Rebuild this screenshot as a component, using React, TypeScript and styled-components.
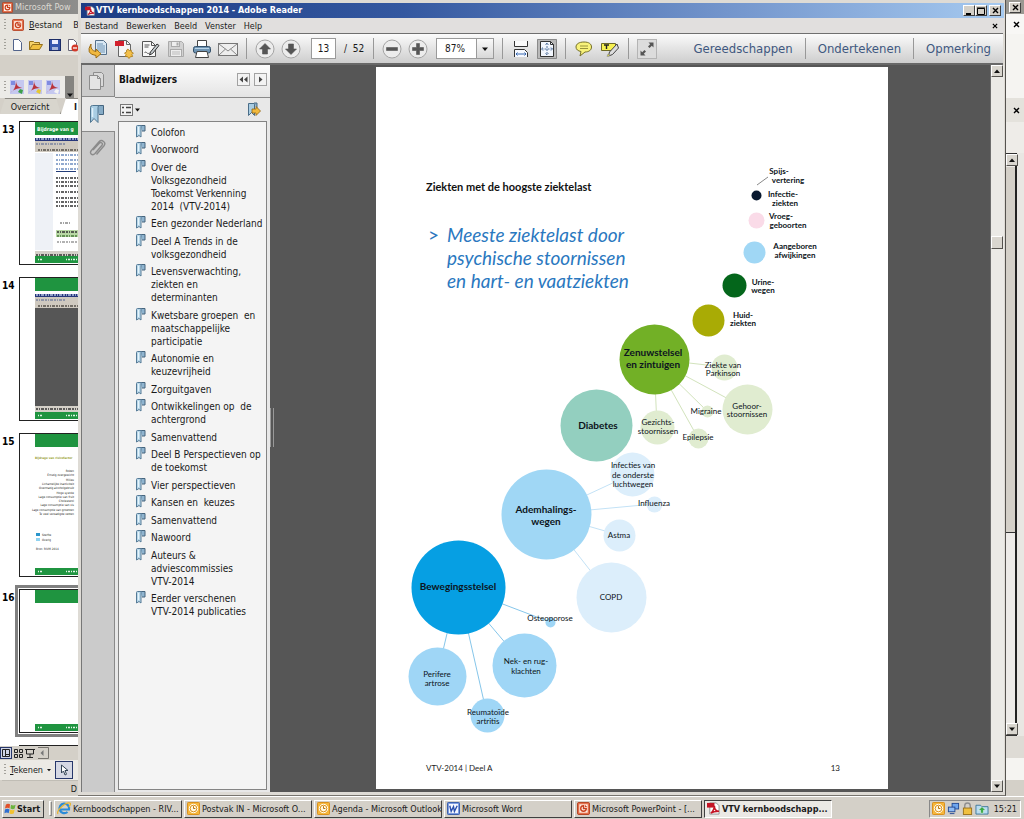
import React from "react";
import styled, { createGlobalStyle } from "styled-components";

const ui = `"DejaVu Sans Condensed", "DejaVu Sans", sans-serif`;
const doc = `Lato, "Noto Sans", sans-serif`;

const GlobalStyle = createGlobalStyle`
  * { box-sizing: border-box; }
  body { margin: 0; background: #d4d0c8; font: 9px/12px ${ui}; color: #1a1a1a; overflow: hidden; }
  button, input, select { font: inherit; color: inherit; margin: 0; padding: 0; border: 0; background: none; }
  button { flex: none; display: flex; align-items: center; justify-content: center; }
  svg { display: block; flex: none; }
  a { color: inherit; text-decoration: none; }
`;

/* ---------- Desktop ---------- */
const Desktop = styled.div`
  display: flex;
  flex-direction: column;
  height: 100vh;
  min-height: 600px;
`;
const Windows = styled.main`
  flex: 1;
  min-height: 0;
  display: grid;
  grid-template-columns: 78px minmax(0, 1fr) 18px;
  grid-template-rows: minmax(0, 1fr);
`;

/* ---------- PowerPoint, visible left edge ---------- */
const PowerPoint = styled.section`
  display: flex;
  flex-direction: column;
  overflow: hidden;
  background: #d4d0c8;
  white-space: nowrap;
`;
const PptTitle = styled.div`
  display: flex;
  align-items: center;
  gap: 2px;
  height: 14px;
  padding-left: 2px;
  background: linear-gradient(90deg, #7c7c7c, #8e8e8c);
  color: #dcd9d2;
  font-size: 9px;
`;
const PptRow = styled.div<{ $h: number }>`
  display: flex;
  align-items: center;
  gap: 6px;
  height: ${(p) => p.$h}px;
  padding-left: 4px;
  background: #e6e4de;
`;
const PptMenu = styled.button`
  margin: 0 5px 0 -1px;
`;
const PptFill = styled.div`
  height: 21px;
`;
const PptTools = styled.div`
  display: flex;
  align-items: center;
  gap: 4px;
  height: 22px;
  width: 74px;
  padding-left: 4px;
  background: #ecebe7;
`;
const Overflow = styled.button`
  align-self: stretch;
  width: 9px;
  margin-left: auto;
  background: #858480;
  && { align-items: flex-end; }
`;
const Tabs = styled.div`
  display: flex;
  height: 16px;
  background: #d4d0c8;
`;
const Tab = styled.button<{ $active?: boolean }>`
  flex: none;
  height: 16px;
  width: 61px;
  background: ${(p) => (p.$active ? "#fff" : "#d8d5cd")};
  border-top: 1px solid #8b8982;
  border-right: 1px solid #8b8982;
  clip-path: polygon(5px 0, 92% 0, 100% 100%, 0 100%);
  ${(p) => p.$active && "font-weight: bold; && { justify-content: flex-start; padding-left: 13px; }"}
`;
const Slides = styled.ol`
  flex: 1;
  min-height: 0;
  overflow: hidden;
  margin: 0;
  padding: 7px 0 0;
  list-style: none;
  background: #fff;
  display: flex;
  flex-direction: column;
  gap: 12px;
`;
const Slide = styled.li`
  display: grid;
  grid-template-columns: 19px 1fr;
  flex: none;
  height: 144px;
  color: #000;
`;
const SlideNo = styled.span`
  padding-left: 2px;
  font: bold 10px/18px ${ui};
`;
const Thumb = styled.div<{ $selected?: boolean }>`
  width: 100px;
  border: 1px solid #222;
  background: #fff;
  outline: ${(p) => (p.$selected ? "3px solid #808080" : "none")};
  outline-offset: 1px;
`;
const PptFooter = styled.div`
  display: flex;
  align-items: center;
  height: 14px;
  background: #d4d0c8;
`;
const Draw = styled.div`
  display: flex;
  align-items: center;
  gap: 4px;
  height: 20px;
  padding-left: 4px;
  background: #eceae5;
`;
const DrawCursor = styled.button`
  width: 18px;
  height: 18px;
  border: 1px solid #27376b;
  background: #d5d8e4;
`;
const PptStatus = styled.div`
  height: 15px;
  margin: 0 0 1px 2px;
  text-align: right;
  padding-right: 1px;
  line-height: 16px;
  border-top: 1px solid #c0bdb5;
`;

/* ---------- Reader window ---------- */
const Reader = styled.section`
  display: flex;
  flex-direction: column;
  min-width: 0;
  padding: 3px 1px 3px 3px;
  background: #dedbd5;
  border-right: 1px solid #55534f;
  border-bottom: 1px solid #77746e;
`;
const TitleBar = styled.header`
  display: flex;
  align-items: center;
  gap: 1px;
  height: 15px;
  padding: 0 3px 0 4px;
  background: linear-gradient(90deg, #1c3c84, #3458a0 35%, #7395cc 70%, #a6caf0);
  color: #fff;
`;
const Title = styled.h1`
  flex: 1;
  margin: 0;
  font: bold 9px/15px ${ui};
  white-space: nowrap;
`;
const WinButton = styled.button`
  width: 12px;
  height: 11px;
  background: #d4d0c8;
  border: 1px solid;
  border-color: #fff #404040 #404040 #fff;
  color: #000;
`;
const WinButtons = styled.div`
  display: flex;
  & > :last-child { margin-left: 2px; }
`;
const MenuBar = styled.nav`
  display: flex;
  align-items: center;
  gap: 8px;
  height: 15px;
  padding: 0 6px 0 4px;
  background: #e1dfde;
  & > :last-child { margin-left: auto; }
`;
const Toolbar = styled.div`
  display: flex;
  align-items: center;
  gap: 8px;
  height: 32px;
  margin-right: 1px;
  padding: 0 12px 0 7px;
  border-top: 1px solid #6f6f6f;
  border-bottom: 2px solid #686868;
  background: linear-gradient(#fbfbfb, #e6e6e6 45%, #cecece);
`;
const Group = styled.div`
  display: flex;
  gap: 6px;
`;
const Tool = styled.button<{ $pressed?: boolean }>`
  width: 20px;
  height: 20px;
  border-radius: 1px;
  ${(p) => p.$pressed && "background: #b9b9b9; box-shadow: inset 0 0 0 1px #8a8a8a;"}
`;
const Divider = styled.span`
  width: 1px;
  height: 21px;
  background: #989898;
`;
const PageBox = styled.input`
  width: 25px;
  height: 21px;
  margin-left: 2px;
  border: 1px solid #9a9a9a;
  background: #fff;
  text-align: center;
  font-size: 10px;
`;
const PageTotal = styled.span`
  width: 21px;
  font-size: 10px;
  white-space: nowrap;
`;
const ZoomBox = styled.div`
  display: flex;
  width: 58px;
  height: 21px;
  border: 1px solid #9a9a9a;
  background: linear-gradient(#fafafa, #d8d8d8);
  align-items: center;
  select {
    appearance: none;
    width: 40px;
    height: 19px;
    padding-left: 8px;
    background: #fff;
    border-right: 1px solid #9a9a9a;
    font-size: 10px;
  }
  svg { margin-left: 5px; }
`;
const Tasks = styled.div`
  display: flex;
  align-items: center;
  gap: 12px;
  margin-left: auto;
  color: #3f5880;
  font-size: 13px;
  line-height: 20px;
`;
const ReaderBody = styled.div`
  flex: 1;
  min-height: 0;
  display: grid;
  grid-template-columns: 34px 155px minmax(0, 1fr) 14px;
`;
const Rail = styled.nav`
  background: #cbcbcb;
  border-right: 1px solid #8a8a8a;
  border-left: 1px solid #777;
`;
const RailButton = styled.button<{ $active?: boolean }>`
  width: ${(p) => (p.$active ? 33 : 32)}px;
  height: ${(p) => (p.$active ? 35 : 32)}px;
  background: ${(p) => (p.$active ? "#e8e8e8" : "#cbcbcb")};
  border-bottom: 1px solid #8a8a8a;
  padding-right: 3px;
  &:last-child { border-bottom: 0; }
`;
const Panel = styled.aside`
  display: flex;
  flex-direction: column;
  min-height: 0;
  background: #e8e8e8;
`;
const PanelHead = styled.div`
  display: flex;
  align-items: center;
  gap: 4px;
  height: 33px;
  padding: 0 3px 3px 4px;
  background: linear-gradient(#fdfdfd, #e4e4e4);
  border-bottom: 1px solid #8a8a8a;
`;
const PanelTitle = styled.h2`
  flex: 1;
  margin: 0;
  font: bold 10px/14px ${ui};
  color: #111;
`;
const Step = styled.button`
  width: 13px;
  height: 13px;
  border: 1px solid #a2a2a2;
  background: #f3f3f3;
`;
const PanelTools = styled.div`
  display: flex;
  align-items: center;
  justify-content: space-between;
  height: 23px;
  padding: 0 9px 0 5px;
`;
const Bookmarks = styled.ul`
  flex: 1;
  min-height: 0;
  overflow: hidden;
  margin: 0 3px 2px;
  padding: 3px 0 0 16px;
  list-style: none;
  background: #f4f4f4;
  border: 1px solid #848484;
  font-size: 10px;
  line-height: 13px;
`;
const Bookmark = styled.li`
  margin-bottom: 4px;
  &:nth-child(even) { margin-bottom: 5px; }
  a {
    display: flex;
    gap: 4px;
    white-space: pre;
  }
  span { padding-top: 1px; margin-bottom: -1px; }
`;
const Viewer = styled.div`
  display: flex;
  align-items: flex-start;
  background: #565656;
  overflow: hidden;
  padding: 2px 0 4px 0;
`;
const Splitter = styled.div`
  align-self: center;
  width: 4px;
  height: 39px;
  border-left: 1px solid #999;
  border-right: 1px solid #999;
`;
const Page = styled.article`
  position: relative;
  flex: 0 1 512px;
  margin: 0 auto;
  height: 722px;
  background: #fff;
  padding: 112px 48px 14px 50px;
  display: flex;
  flex-direction: column;
  font-family: ${doc};
`;
const PageTitle = styled.h3`
  margin: 0 0 28px;
  font: bold 11px/16px ${doc};
  color: #111;
`;
const Message = styled.p`
  margin: 0;
  display: flex;
  gap: 8px;
  font: italic 400 19px/23px ${doc};
  color: #2a78c0;
  white-space: pre-line;
`;
const Caret = styled.span`
  font-style: normal;
  padding-left: 2px;
`;
const PageFoot = styled.footer`
  margin-top: auto;
  display: flex;
  justify-content: space-between;
  font-size: 8px;
  line-height: 14px;
  color: #222;
`;
const Chart = styled.svg`
  position: absolute;
  inset: 0;
  width: 100%;
  height: 100%;
  font-family: ${doc};
`;
const VScroll = styled.div`
  display: flex;
  flex-direction: column;
  justify-content: space-between;
  background: #ebeae6;
  border-left: 1px solid #6d6d6d;
`;
const Arrow = styled.button`
  width: 12px;
  height: 12px;
  background: #d9d6cf;
  border: 1px solid;
  border-color: #fff #55534f #55534f #fff;
`;
const ScrollTrack = styled.div`
  flex: 1;
  padding-top: 159px;
`;
const ScrollThumb = styled.div`
  width: 12px;
  height: 13px;
  background: #d9d6cf;
  border: 1px solid;
  border-color: #fff #55534f #55534f #fff;
`;

/* ---------- Right edge of the window behind ---------- */
const Behind = styled.aside`
  display: flex;
  flex-direction: column;
  background: #f5f4f1;
`;
const BehindTitle = styled.div`
  height: 14px;
  padding: 2px 0 0 3px;
  background: #9a9892;
`;
const BehindRow = styled.div<{ $h: number; $bg: string }>`
  display: flex;
  align-items: center;
  justify-content: center;
  height: ${(p) => p.$h}px;
  padding-left: 2px;
  background: ${(p) => p.$bg};
`;
const BehindBody = styled.div`
  flex: 1;
  min-height: 0;
  display: flex;
  background: #e9e7e3;
`;
const BehindScroll = styled.div`
  display: flex;
  flex-direction: column;
  width: 11px;
  border: 1px solid #333;
  border-right: 2px solid #222;
  border-left: 0;
  background: #edebe8;
`;
const BehindThumb = styled.div`
  flex: 0 0 63%;
  margin-top: 1px;
  background: #d4d0c8;
  border-bottom: 1px solid #333;
`;
const BehindGap = styled.div`
  flex: 1;
`;

/* ---------- Taskbar ---------- */
const Taskbar = styled.footer`
  display: flex;
  align-items: center;
  gap: 2px;
  height: 23px;
  padding: 1px 3px 0 2px;
  background: #d4d0c8;
  border-top: 1px solid #fff;
`;
const TaskButton = styled.button<{ $active?: boolean }>`
  && {
    flex: 0 1 128px;
    justify-content: flex-start;
  }
  min-width: 0;
  gap: 2px;
  height: 18px;
  padding-left: 2px;
  overflow: hidden;
  white-space: nowrap;
  border: 1px solid;
  border-color: ${(p) => (p.$active ? "#404040 #fff #fff #404040" : "#fff #404040 #404040 #fff")};
  background: ${(p) => (p.$active ? "#ebe9e5" : "#d4d0c8")};
  font-weight: ${(p) => (p.$active ? "bold" : "normal")};
`;
const Start = styled(TaskButton)`
  && { flex: none; }
  width: 42px;
  font-weight: bold;
  gap: 0;
  padding-left: 1px;
`;
const Grip = styled.span`
  width: 3px;
  height: 15px;
  margin-left: 3px;
  border: 1px solid;
  border-color: #fff #888 #888 #fff;
`;
const Tray = styled.div`
  display: flex;
  align-items: center;
  gap: 2px;
  height: 18px;
  margin-left: auto;
  padding: 0 3px 0 2px;
  border: 1px solid;
  border-color: #888 #fff #fff #888;
  time { margin-left: 3px; }
`;

/* ---------- Icons ---------- */
const Cross = ({ s = 7 }: { s?: number }) => (
  <svg width={s} height={s} viewBox="0 0 7 7"><path d="M1 1l5 5M6 1L1 6" stroke="#000" strokeWidth="1.4" /></svg>
);
const Tri = ({ dir = "down", s = 6 }: { dir?: "up" | "down"; s?: number }) => (
  <svg width={s} height={s} viewBox="0 0 6 6">
    <path d={dir === "up" ? "M0 5h6L3 1.5z" : "M0 1.5h6L3 5z"} fill="#111" />
  </svg>
);
const PptIcon = ({ s = 12 }: { s?: number }) => (
  <svg width={s} height={s} viewBox="0 0 14 14">
    <rect x=".5" y=".5" width="13" height="13" rx="1.5" fill="#e4704c" stroke="#b23c1c" />
    <rect x="2.5" y="2.5" width="9" height="9" fill="#fff2e8" />
    <path d="M7 4a3 3 0 1 0 3 3H7z" fill="none" stroke="#c8401e" strokeWidth="1.5" /><path d="M8.500 3v2.500h2.500z" fill="#c8401e" />
  </svg>
);
const PdfIcon = ({ s = 13 }: { s?: number }) => (
  <svg width={s} height={s} viewBox="0 0 14 14">
    <path d="M3 1h7l3 3v9H3z" fill="#fff" stroke="#8e8e8e" />
    <rect x="0" y="1" width="8" height="5" fill="#c41425" />
    <path d="M4 12c2-1 4-5 4-8 0 4 2 6 5 6-3 0-6 0-9 2z" fill="none" stroke="#c41425" strokeWidth="1.600" />
  </svg>
);
const OutlookIcon = () => (
  <svg width="13" height="13" viewBox="0 0 14 14">
    <rect x=".5" y=".5" width="13" height="13" rx="1" fill="#f6b73c" stroke="#d88a12" />
    <circle cx="7" cy="7" r="4.500" fill="#fff8e0" stroke="#fff" /><circle cx="7" cy="7" r="3.600" fill="#fff8e0" stroke="#d88a12" />
    <path d="M7 4.500V7h2" fill="none" stroke="#b86c00" />
  </svg>
);
const WordIcon = () => (
  <svg width="13" height="13" viewBox="0 0 14 14">
    <rect x=".5" y=".5" width="13" height="13" rx="1" fill="#6d8fdc" stroke="#3157a8" />
    <rect x="2" y="2" width="10" height="10" fill="#f4f7ff" />
    <path d="M3 4l1.500 6L7 5l1 5 3-6" fill="none" stroke="#2a4fae" strokeWidth="1.500" />
  </svg>
);
const IeIcon = () => (
  <svg width="14" height="13" viewBox="0 0 14 13">
    <path d="M3.500 7.500h8.500A4.800 4.800 0 1 0 10.500 10" fill="none" stroke="#2c8bd8" strokeWidth="2.200" />
    <path d="M1 12C-1 9 8 0 13 1c1 .5 0 3-1 4" fill="none" stroke="#e8b42c" strokeWidth="1.200" />
  </svg>
);
const FlagIcon = () => (
  <svg width="13" height="13" viewBox="0 0 14 14">
    <path d="M2 3q2-2 4.500-.5L6 7q-2-1.500-5 0z" fill="#e2502a" /><path d="M7.500 3q2.500 1.500 5 0l-1 4q-2 1.500-4.500 0z" fill="#6cb33e" />
    <path d="M1 8q2.500-1.500 5 0l-1 4q-2-1.500-4.500 0z" fill="#2f6fd0" /><path d="M6.800 8q2.500 1.500 4.700 0l-1 4.500q-2.500 1-4.700-.5z" fill="#f2c230" />
  </svg>
);
const BookmarkIcon = () => (
  <svg width="12" height="13" viewBox="0 0 12 13">
    <path d="M5.500 .5h4.500v5.500H7" fill="#8fb4cf" stroke="#47657d" />
    <path d="M1.500 1.500q0-1 1-1h4q-.5 0-.5 1V12l-2-1.500L1.500 12z" fill="#b9d8ea" stroke="#547a96" />
    <path d="M3.500 2v7" stroke="#e6f4fb" />
  </svg>
);
const Ico = ({ children }: { children: React.ReactNode }) => (
  <svg width="20" height="20" viewBox="0 0 20 20" fill="none" strokeWidth="1">{children}</svg>
);
const ShareIcon = () => (
  <Ico>
    <path d="M7.500 1.500h8l3 3v11h-11z" fill="#d9e8f4" stroke="#56708a" />
    <path d="M9 5h6M9 7h8M9 9h8M9 11h8M12 13h5" stroke="#6f94b5" />
    <path d="M3 5q-1 6.500 5 7.500v-2.500l5 4.700-5 4.300v-2.500Q-3 15 3 5z" fill="#f0b840" stroke="#9c6d14" />
  </Ico>
);
const CreateIcon = () => (
  <Ico>
    <path d="M4.500 1.500h8l4 4v12h-12z" fill="#f6f6f6" stroke="#666" /><path d="M12.500 1.500v4h4" stroke="#666" />
    <rect x="1" y="2" width="9" height="5" fill="#d3202c" />
    <path d="M14 10l1.200 1.700 2-.7.200 2.100 2 .9-1.500 1.500.7 2-2.100.2-1.500 1.800-1.500-1.800-2.200-.2.700-2-1.500-1.500 2-.9.200-2.100z" fill="#f4c04a" stroke="#a87816" strokeWidth=".8" />
  </Ico>
);
const SignIcon = () => (
  <Ico>
    <path d="M2.500 2.500h9l4 4v11h-13z" fill="#f8f8f8" stroke="#555" /><path d="M11.500 2.500v4h4" stroke="#555" />
    <path d="M4.500 6h5M4.500 8h4M4.500 14c2-3 2 2 5 0" stroke="#555" />
    <path d="M17 5l2 1.500-6.500 8-3 1.500 1-3z" fill="#c5ccd0" stroke="#333" />
  </Ico>
);
const SaveIcon = () => (
  <Ico>
    <path d="M2.500 2.500h13l2 2v13h-15z" fill="#d2d2d2" stroke="#aaa" />
    <rect x="5.500" y="2.500" width="8" height="5" fill="#eee" stroke="#aaa" /><rect x="10.500" y="3.500" width="2" height="3" fill="#aaa" />
    <rect x="4.500" y="10.500" width="11" height="7" fill="#eee" stroke="#aaa" /><path d="M6 13h8M6 15h8" stroke="#bbb" />
  </Ico>
);
const PrintIcon = () => (
  <Ico>
    <path d="M5.500 7V1.500h9V7" fill="#fff" stroke="#444" />
    <rect x="1.500" y="7.500" width="17" height="6.500" rx="2" fill="#6f95b4" stroke="#34506a" /><path d="M3 9.500h14" stroke="#b9d4e8" />
    <path d="M5 12.500h10l1.500 6h-13z" fill="#fff" stroke="#444" />
  </Ico>
);
const MailIcon = () => (
  <Ico><rect x=".5" y="4.500" width="19" height="12" fill="#eee" stroke="#777" /><path d="M1 5l9 7 9-7M1 16l6.500-6M19 16l-6.500-6" stroke="#888" /></Ico>
);
const Round = ({ d }: { d: string }) => (
  <Ico><circle cx="10" cy="10" r="9" fill="#ececec" stroke="#a4a4a4" /><path d={d} fill="#555" stroke="#555" strokeWidth=".6" /></Ico>
);
const FitWidthIcon = () => (
  <Ico>
    <path d="M3.500 2v5.500h13V2" fill="#fafafa" stroke="#333" /><path d="M3.500 18v-7.500h10l3 3V18" fill="#f6f9ff" stroke="#333" />
    <path d="M5 15h10M6.500 13.500L5 15l1.500 1.500M13.500 13.500L15 15l-1.500 1.500" stroke="#3868b0" />
  </Ico>
);
const FitPageIcon = () => (
  <Ico>
    <path d="M3.500 2.500h10l3 3v12h-13z" fill="#f2f6fd" stroke="#333" /><path d="M13.500 2.500v3h3" stroke="#333" />
    <path d="M10 4v12M4.500 10h11M8.500 5.500L10 4l1.500 1.500M8.500 14.500L10 16l1.500-1.500M6 8.500L4.500 10 6 11.500M14 8.500l1.500 1.500-1.500 1.500" stroke="#50709c" strokeDasharray="2 1" />
  </Ico>
);
const NoteIcon = () => (
  <Ico><path d="M10 3c5 0 7.500 2 7.500 5s-2.500 5-6.500 5l-5 4 1-4.500C4 12 2 10.500 2 8c0-3 3-5 8-5z" fill="#f8f27a" stroke="#76712a" /><path d="M6 7h8M6 9.500h8" stroke="#9a943c" /></Ico>
);
const HighlightIcon = () => (
  <Ico>
    <path d="M1.500 4.500h14v7h-14z" fill="#f6f050" stroke="#6f6b28" /><path d="M4 6h5M6.500 6v4" stroke="#222" strokeWidth="1.400" />
    <path d="M17 5l1.500 4-6 6.500-4 1.500 1-4z" fill="#ddd" stroke="#444" /><path d="M8 15l-1 2.500 3-1z" fill="#f6f050" stroke="#777" strokeWidth=".5" />
  </Ico>
);
const FullIcon = () => (
  <Ico>
    <rect x=".5" y=".5" width="19" height="19" fill="#dcdcdc" stroke="#b4b4b4" />
    <path d="M11.500 3.500h5v5l-1.700-1.700L12.500 9 11 7.500l2.200-2.300zM8.500 16.500h-5v-5l1.700 1.700L7.500 11 9 12.500l-2.200 2.300z" fill="#555" />
  </Ico>
);
const PagesIcon = () => (
  <svg width="19" height="20" viewBox="0 0 19 20"><path d="M6.500 1.500h8l2 2v12h-10z" fill="#d9d9d9" stroke="#8d8d8d" /><path d="M2.500 4.500h8l3 3v11h-11z" fill="#e4e4e4" stroke="#8d8d8d" /><path d="M10.500 4.500v3h3" fill="none" stroke="#8d8d8d" /></svg>
);
const BigBookmarkIcon = () => (
  <svg width="16" height="20" viewBox="0 0 16 20"><path d="M6 1.500h8.500v9H10" fill="#86abc6" stroke="#44647e" /><path d="M1.500 3.500q0-2 2-2h7q-1.500 0-1.500 2V18.500l-4-4-3.500 4z" fill="#a9cde3" stroke="#4f7590" /><path d="M3.500 4v9" stroke="#dff0fa" strokeWidth="1.500" /></svg>
);
const ClipIcon = () => (
  <svg width="18" height="20" viewBox="0 0 18 20" fill="none"><path d="M5 12l6.500-7c1.500-1.500 4 .5 2.500 2.300L7 15.500c-2.500 2.700-6 0-3.800-2.800L11 3.800c3-3 7.500.7 5 3.900L8.500 16.500" stroke="#8b8b8b" strokeWidth="1.400" /></svg>
);
const OptionsIcon = () => (
  <svg width="20" height="12" viewBox="0 0 20 12"><rect x=".5" y=".5" width="12" height="11" fill="#f2f2f2" stroke="#777" /><path d="M2 3.500h2M2 8.500h2M6 3.500h5M6 8.500h5" stroke="#444" strokeWidth="1.500" /><path d="M15 4.500h5L17.500 7.500z" fill="#111" /></svg>
);
const GotoIcon = () => (
  <svg width="14" height="15" viewBox="0 0 14 15"><path d="M1.500 1.500h6v12l-3-3-3 3z" fill="#a9cde3" stroke="#4a6d88" /><path d="M7 1h3v6" fill="#86abc6" stroke="#4a6d88" /><path d="M5 7h4V4.500l4.500 4.500L9 13.500V11H5z" fill="#f2b93c" stroke="#8f6414" strokeWidth=".8" /></svg>
);
const StepIcon = ({ double }: { double?: boolean }) => (
  <svg width="9" height="7" viewBox="0 0 9 7"><path d={double ? "M4 .5v6L.5 3.500zM8.500 .5v6L5 3.500z" : "M3 .5v6L6.500 3.500z"} fill="#444" /></svg>
);
const GripDots = () => (
  <svg width="2" height="12" viewBox="0 0 2 12"><path d="M1 0v12" stroke="#8b8982" strokeDasharray="1 2" strokeWidth="1.500" /></svg>
);
const NewIcon = () => <svg width="11" height="12" viewBox="0 0 11 12"><path d="M1.500 .5h5l3 3v8h-8z" fill="#fff" stroke="#52648c" /></svg>;
const OpenIcon = () => <svg width="14" height="12" viewBox="0 0 14 12"><path d="M.5 10.500v-8h4l1 1h5v3" fill="#f5d26a" stroke="#94701c" /><path d="M.5 10.500l3-5h10l-3 5z" fill="#f0c040" stroke="#94701c" /></svg>;
const DiskIcon = () => <svg width="12" height="12" viewBox="0 0 12 12"><rect x=".5" y=".5" width="11" height="11" fill="#3857ae" stroke="#1c2c66" /><rect x="3" y="1" width="6" height="4" fill="#eef" /><rect x="3" y="8" width="6" height="3" fill="#aab6dc" /></svg>;
const DenyIcon = () => <svg width="12" height="13" viewBox="0 0 12 13"><path d="M1.500 .5h5l3 3v8h-8z" fill="#fff" stroke="#667" /><circle cx="8" cy="9" r="3.500" fill="#d23a2a" /><path d="M6 9h4" stroke="#fff" strokeWidth="1.300" /></svg>;
const AcroIcon = ({ c }: { c: string }) => (
  <svg width="14" height="14" viewBox="0 0 14 14"><rect width="14" height="14" fill="#c5c8f0" /><path d="M0 13C5 10 6 5 6 0c0 6 3 8 8 8C8 8 4 9 0 13z" fill="#b9343c" /><path d="M1 1h4v4H1z" fill="#7f8be0" /><path d="M8 12l2-3 3 1-1 4z" fill={c} /></svg>
);

/* ---------- Slide thumbnails ---------- */
type Kind = "doc" | "dark" | "chart" | "blank";
const noise = (y: number, x: number, w: number, c = "#333") => (
  <path key={`${x}-${y}`} d={`M${x} ${y}H${x + w}`} stroke={c} strokeWidth="1.600" strokeDasharray="2 1 1 1 3 1" />
);
const SlideArt = ({ kind }: { kind: Kind }) => (
  <svg width="98" height="142" viewBox="0 0 98 142">
    <rect x="15" width="83" height="13" fill="#1f9440" />
    {(kind === "doc" || kind === "dark") && (
      <>
        <rect x="15" y="16" width="83" height="14" fill="#cfc9bf" />
        <rect x="15" y="16" width="83" height="3" fill="#27377b" />
        {noise(17, 16, 80, "#b5c1e4")}{noise(22, 16, 30, "#7b84a0")}{noise(28, 18, 70, "#55504a")}
      </>
    )}
    {kind === "doc" && (
      <>
        <text x="17" y="9" fontSize="5" fontWeight="bold" fill="#fff">Bijdrage van g</text>
        <rect x="15" y="31" width="18" height="97" fill="#eef1f6" />
        {[33, 38, 42, 47].map((y) => noise(y, 36, 60, "#6f8fc0"))}
        <rect x="36" y="49" width="20" height="1" fill="#223c78" />
        {[56, 60, 64, 70, 76, 80, 84].map((y) => noise(y, 36, 60))}
        {noise(101, 40, 10, "#888")}
        <rect x="36" y="108" width="62" height="7" fill="#b8d8a4" />
        {noise(110, 37, 24, "#333")}{noise(114, 37, 30, "#4b7c3c")}{noise(120, 37, 50, "#999")}
        <rect x="15" y="129" width="83" height="5" fill="#d4d0c8" />{noise(133, 16, 80)}
      </>
    )}
    {kind === "dark" && (
      <><rect x="15" y="30" width="83" height="98" fill="#565656" /><rect x="15" y="128" width="83" height="6" fill="#d4d0c8" />{noise(131, 16, 80)}</>
    )}
    {kind === "chart" && (
      <>
        <text x="15" y="25" fontSize="3" fontWeight="bold" fill="#98a233">Bijdrage van risicofactor</text>
        {["Roken", "Ernstig overgewicht", "Milieu", "Lichamelijke inactiviteit", "Overmatig alcoholgebruik", "Hoge systole", "Lage consumptie van fruit", "Cholesterol", "Lage consumptie van vis", "Lage consumptie van groenten", "Te veel verzadigde vetten"].map((t, i) => (
          <text key={t} x="54" y={38 + i * 4.300} textAnchor="end" fontSize="3" fill="#222">{t}</text>
        ))}
        <rect x="16" y="99" width="4" height="3" fill="#2b96cc" /><text x="22" y="102" fontSize="3" fill="#222">Sterfte</text>
        <rect x="16" y="104" width="4" height="3" fill="#8fd2f0" /><text x="22" y="107" fontSize="3" fill="#222">Overig</text>
        <text x="16" y="116" fontSize="3" fill="#222">Bron: RIVM 2014</text>
      </>
    )}
    <rect x="15" y="134" width="83" height="7" fill="#1f9440" />
    <path d="M18 137.500h4M46 137.500h12" stroke="#e2f4e6" strokeWidth="1.500" strokeDasharray="1 1 2 1" />
  </svg>
);

/* ---------- Document data ---------- */
const bookmarks = [
  "Colofon", "Voorwoord", "Over de\nVolksgezondheid\nToekomst Verkenning\n2014  (VTV-2014)", "Een gezonder Nederland",
  "Deel A Trends in de\nvolksgezondheid", "Levensverwachting,\nziekten en\ndeterminanten", "Kwetsbare groepen  en\nmaatschappelijke\nparticipatie",
  "Autonomie en\nkeuzevrijheid", "Zorguitgaven", "Ontwikkelingen op  de\nachtergrond", "Samenvattend", "Deel B Perspectieven op\nde toekomst",
  "Vier perspectieven", "Kansen en  keuzes", "Samenvattend", "Nawoord", "Auteurs &\nadviescommissies\nVTV-2014", "Eerder verschenen\nVTV-2014 publicaties",
];

type Bubble = { x: number; y: number; r: number; fill: string; from?: [number, number] };
const zen: [number, number] = [278, 292];
const adem: [number, number] = [170, 447];
const beweg: [number, number] = [82, 520];
const bubbles: Bubble[] = [
  { x: 348, y: 300, r: 13, fill: "#e0ecd0", from: zen },
  { x: 371, y: 342, r: 25, fill: "#e0ecd0", from: zen },
  { x: 331, y: 344, r: 6, fill: "#e0ecd0", from: zen },
  { x: 322, y: 371, r: 10, fill: "#e0ecd0", from: zen },
  { x: 281, y: 360, r: 17, fill: "#e0ecd0", from: zen },
  { x: 256, y: 407, r: 22, fill: "#dceefb", from: adem },
  { x: 278, y: 437, r: 8, fill: "#dceefb", from: adem },
  { x: 243, y: 468, r: 16, fill: "#dceefb", from: adem },
  { x: 235, y: 530, r: 35, fill: "#dceefb", from: adem },
  { x: 174, y: 555, r: 5, fill: "#9fd6f6", from: beweg },
  { x: 148, y: 598, r: 32, fill: "#9fd6f6", from: beweg },
  { x: 61, y: 609, r: 29, fill: "#9fd6f6", from: beweg },
  { x: 111, y: 648, r: 17, fill: "#9fd6f6", from: beweg },
  { x: 278, y: 292, r: 35, fill: "#72b026" },
  { x: 220, y: 358, r: 36, fill: "#93cfbf" },
  { x: 170, y: 447, r: 45, fill: "#a0d7f5" },
  { x: 82, y: 520, r: 47, fill: "#069fe3" },
  { x: 332, y: 253, r: 16, fill: "#a9ab05" },
  { x: 358, y: 218, r: 12, fill: "#04661b" },
  { x: 378, y: 185, r: 11, fill: "#a0d7f5" },
  { x: 380, y: 153, r: 8, fill: "#fadbe8" },
  { x: 380, y: 128, r: 5, fill: "#08182f" },
];
const lineColor = (f: string) => (f === "#e0ecd0" ? "#d2e3bc" : f === "#dceefb" ? "#c3e2f6" : "#86c6ea");

type Label = { x: number; y: number; text: string; kind: "big" | "side" | "small" };
const labels: Label[] = [
  { x: 277, y: 289, text: "Zenuwstelsel", kind: "big" }, { x: 277, y: 301, text: "en zintuigen", kind: "big" },
  { x: 222, y: 362, text: "Diabetes", kind: "big" },
  { x: 170, y: 446, text: "Ademhalings-", kind: "big" }, { x: 170, y: 458, text: "wegen", kind: "big" },
  { x: 82, y: 523, text: "Bewegingsstelsel", kind: "big" },
  { x: 403, y: 107, text: "Spijs-", kind: "side" }, { x: 412, y: 116, text: "vertering", kind: "side" },
  { x: 407, y: 130, text: "Infectie-", kind: "side" }, { x: 409, y: 139, text: "ziekten", kind: "side" },
  { x: 405, y: 152, text: "Vroeg-", kind: "side" }, { x: 412, y: 161, text: "geboorten", kind: "side" },
  { x: 419, y: 182, text: "Aangeboren", kind: "side" }, { x: 419, y: 191, text: "afwijkingen", kind: "side" },
  { x: 387, y: 218, text: "Urine-", kind: "side" }, { x: 387, y: 226, text: "wegen", kind: "side" },
  { x: 367, y: 251, text: "Huid-", kind: "side" }, { x: 367, y: 259, text: "ziekten", kind: "side" },
  { x: 347, y: 301, text: "Ziekte van", kind: "small" }, { x: 347, y: 309, text: "Parkinson", kind: "small" },
  { x: 371, y: 342, text: "Gehoor-", kind: "small" }, { x: 371, y: 350, text: "stoornissen", kind: "small" },
  { x: 330, y: 347, text: "Migraine", kind: "small" },
  { x: 282, y: 358, text: "Gezichts-", kind: "small" }, { x: 282, y: 367, text: "stoornissen", kind: "small" },
  { x: 322, y: 373, text: "Epilepsie", kind: "small" },
  { x: 257, y: 401, text: "Infecties van", kind: "small" }, { x: 257, y: 411, text: "de onderste", kind: "small" }, { x: 257, y: 420, text: "luchtwegen", kind: "small" },
  { x: 278, y: 439, text: "Influenza", kind: "small" },
  { x: 243, y: 471, text: "Astma", kind: "small" }, { x: 235, y: 533, text: "COPD", kind: "small" },
  { x: 174, y: 554, text: "Osteoporose", kind: "small" },
  { x: 150, y: 597, text: "Nek- en rug-", kind: "small" }, { x: 150, y: 607, text: "klachten", kind: "small" },
  { x: 61, y: 610, text: "Perifere", kind: "small" }, { x: 61, y: 619, text: "artrose", kind: "small" },
  { x: 112, y: 648, text: "Reumatoïde", kind: "small" }, { x: 112, y: 657, text: "artritis", kind: "small" },
];
const sizes = { big: 10, side: 8, small: 8 };

export default function App() {
  return (
    <>
      <GlobalStyle />
      <Desktop>
        <Windows>
          <PowerPoint>
            <PptTitle><PptIcon s={11} />Microsoft Pow</PptTitle>
            <PptRow $h={21}>
              <GripDots /><PptIcon /><PptMenu><span><u>B</u>estand</span></PptMenu><button>B</button>
            </PptRow>
            <PptRow $h={20}>
              <GripDots />
              <button aria-label="Nieuw"><NewIcon /></button><button aria-label="Openen"><OpenIcon /></button>
              <button aria-label="Opslaan"><DiskIcon /></button><button aria-label="Machtiging"><DenyIcon /></button>
            </PptRow>
            <PptFill />
            <PptTools>
              <GripDots />
              <button aria-label="Naar PDF"><AcroIcon c="#3da04a" /></button><button aria-label="PDF e-mailen"><AcroIcon c="#e4c832" /></button>
              <button aria-label="PDF controleren"><AcroIcon c="#f4f4f4" /></button>
              <Overflow aria-label="Meer"><Tri /></Overflow>
            </PptTools>
            <Tabs><Tab>Overzicht</Tab><Tab $active>I</Tab></Tabs>
            <Slides>
              {(["doc", "dark", "chart", "blank", "blank"] as Kind[]).map((k, i) => (
                <Slide key={i}><SlideNo>{i < 4 && 13 + i}</SlideNo><Thumb $selected={i === 3}><SlideArt kind={k} /></Thumb></Slide>
              ))}
            </Slides>
            <PptFooter>
              <svg width="49" height="12" viewBox="0 0 49 12" fill="none" stroke="#222">
                <rect x=".5" y=".5" width="11" height="11" fill="#cfd4e6" stroke="#27376b" /><path d="M2.500 2.500h7v7h-7zM5.500 2v8M5 7.500h4" />
                <path d="M14.500 2.500h3v3h-3zM19.500 2.500h3v3h-3zM14.500 7.500h3v3h-3zM19.500 7.500h3v3h-3zM25 2.500h10M26.500 3v4h7V3M30 7v3M27 10.500h6" />
                <path d="M38 .5h10.500v11H38" stroke="#77746e" /><path d="M43.500 3v6L40.500 6z" fill="#777" stroke="none" />
              </svg>
            </PptFooter>
            <Draw>
              <GripDots /><button><span><u>T</u>ekenen</span></button><Tri s={4} />
              <DrawCursor aria-label="Selecteren">
                <svg width="9" height="12" viewBox="0 0 9 12"><path d="M1.500 1v8l2-2 1.500 4 1.500-.7L5 6.500h3z" fill="#fff" stroke="#345" /></svg>
              </DrawCursor>
            </Draw>
            <PptStatus>D</PptStatus>
          </PowerPoint>

          <Reader>
            <TitleBar>
              <PdfIcon s={10} />
              <Title>VTV kernboodschappen 2014 - Adobe Reader</Title>
              <WinButtons>
                <WinButton aria-label="Minimaliseren"><svg width="8" height="8"><path d="M1 7h5" stroke="#000" strokeWidth="2" /></svg></WinButton>
                <WinButton aria-label="Maximaliseren"><svg width="8" height="8" fill="none"><path d="M.5 1.500h7v6h-7zM0 1h8" stroke="#000" /></svg></WinButton>
                <WinButton aria-label="Sluiten"><Cross /></WinButton>
              </WinButtons>
            </TitleBar>
            <MenuBar>
              {["Bestand", "Bewerken", "Beeld", "Venster", "Help"].map((m) => <button key={m}>{m}</button>)}
              <button aria-label="Document sluiten"><Cross s={6} /></button>
            </MenuBar>
            <Toolbar>
              <Group>
                <Tool aria-label="Delen"><ShareIcon /></Tool><Tool aria-label="PDF maken"><CreateIcon /></Tool>
                <Tool aria-label="Ondertekenen"><SignIcon /></Tool><Tool aria-label="Opslaan"><SaveIcon /></Tool>
                <Tool aria-label="Afdrukken"><PrintIcon /></Tool><Tool aria-label="E-mail"><MailIcon /></Tool>
              </Group>
              <Divider />
              <Group>
                <Tool aria-label="Vorige pagina"><Round d="M10 4.500l5.500 5.500h-3v5h-5v-5h-3z" /></Tool>
                <Tool aria-label="Volgende pagina"><Round d="M10 15.500L4.500 10h3V5h5v5h3z" /></Tool>
              </Group>
              <PageBox aria-label="Pagina" defaultValue="13" />
              <PageTotal>/&nbsp; 52</PageTotal>
              <Divider />
              <Group>
                <Tool aria-label="Uitzoomen"><Round d="M4.500 8.500h11v3h-11z" /></Tool>
                <Tool aria-label="Inzoomen"><Round d="M8.500 4.500h3v4h4v3h-4v4h-3v-4h-4v-3h4z" /></Tool>
              </Group>
              <ZoomBox>
                <select aria-label="Zoom" defaultValue="87%"><option>87%</option><option>100%</option></select>
                <Tri />
              </ZoomBox>
              <Divider />
              <Group>
                <Tool aria-label="Paginabreedte"><FitWidthIcon /></Tool><Tool $pressed aria-label="Hele pagina"><FitPageIcon /></Tool>
              </Group>
              <Divider />
              <Group>
                <Tool aria-label="Notitie"><NoteIcon /></Tool><Tool aria-label="Markeren"><HighlightIcon /></Tool>
              </Group>
              <Divider />
              <Tool aria-label="Leesmodus"><FullIcon /></Tool>
              <Tasks>
                <button>Gereedschappen</button><Divider /><button>Ondertekenen</button><Divider /><button>Opmerking</button>
              </Tasks>
            </Toolbar>
            <ReaderBody>
              <Rail>
                <RailButton aria-label="Pagina's"><PagesIcon /></RailButton>
                <RailButton $active aria-label="Bladwijzers"><BigBookmarkIcon /></RailButton>
                <RailButton aria-label="Bijlagen"><ClipIcon /></RailButton>
              </Rail>
              <Panel>
                <PanelHead>
                  <PanelTitle>Bladwijzers</PanelTitle>
                  <Step aria-label="Samenvouwen"><StepIcon double /></Step><Step aria-label="Uitvouwen"><StepIcon /></Step>
                </PanelHead>
                <PanelTools>
                  <button aria-label="Opties"><OptionsIcon /></button><button aria-label="Huidige bladwijzer"><GotoIcon /></button>
                </PanelTools>
                <Bookmarks>
                  {bookmarks.map((b, i) => (
                    <Bookmark key={i}><a href="#pagina"><BookmarkIcon /><span>{b}</span></a></Bookmark>
                  ))}
                </Bookmarks>
              </Panel>
              <Viewer>
                <Splitter />
                <Page id="pagina">
                  <PageTitle>Ziekten met de hoogste ziektelast</PageTitle>
                  <Message><Caret>&gt;</Caret><span>{"Meeste ziektelast door\npsychische stoornissen\nen hart- en vaatziekten"}</span></Message>
                  <Chart viewBox="0 0 512 722">
                    {bubbles.filter((b) => b.from).map((b, i) => (
                      <line key={i} x1={b.from![0]} y1={b.from![1]} x2={b.x} y2={b.y} stroke={lineColor(b.fill)} />
                    ))}
                    <path d="M381 118l11-8" stroke="#555" strokeWidth=".7" />
                    {bubbles.map((b, i) => <circle key={i} cx={b.x + 0.500} cy={b.y + 0.500} r={b.r} fill={b.fill} />)}
                    {labels.map((l, i) => (
                      <text key={i} x={l.x} y={l.y} textAnchor="middle" fontSize={sizes[l.kind]} fontWeight={l.kind === "small" ? 400 : 700} fill="#0c1420">{l.text}</text>
                    ))}
                  </Chart>
                  <PageFoot><span>VTV-2014 | Deel A</span><span>13</span></PageFoot>
                </Page>
              </Viewer>
              <VScroll>
                <Arrow aria-label="Omhoog"><Tri dir="up" /></Arrow>
                <ScrollTrack><ScrollThumb /></ScrollTrack>
                <Arrow aria-label="Omlaag"><Tri /></Arrow>
              </VScroll>
            </ReaderBody>
          </Reader>

          <Behind>
            <BehindTitle><WinButton aria-label="Venster sluiten"><Cross /></WinButton></BehindTitle>
            <BehindRow $h={20} $bg="#f8f7f5"><Cross /></BehindRow>
            <BehindRow $h={64} $bg="#f5f4f1" />
            <BehindRow $h={24} $bg="#e4e2dc"><Cross /></BehindRow>
            <BehindRow $h={31} $bg="#eeece8" />
            <BehindBody>
              <BehindScroll>
                <Arrow aria-label="Omhoog"><Tri dir="up" /></Arrow>
                <BehindThumb />
                <BehindGap />
                <Arrow aria-label="Omlaag"><Tri /></Arrow>
              </BehindScroll>
            </BehindBody>
            <BehindRow $h={22} $bg="#dedbd5" />
            <BehindRow $h={22} $bg="#f5f4f1" />
            <BehindRow $h={16} $bg="#d4d0c8" />
          </Behind>
        </Windows>

        <Taskbar>
          <Start><FlagIcon />Start</Start>
          <Grip />
          <TaskButton><IeIcon />Kernboodschappen - RIV...</TaskButton>
          <TaskButton><OutlookIcon />Postvak IN - Microsoft O...</TaskButton>
          <TaskButton><OutlookIcon />Agenda - Microsoft Outlook</TaskButton>
          <TaskButton><WordIcon />Microsoft Word</TaskButton>
          <TaskButton><PptIcon s={13} />Microsoft PowerPoint - [...</TaskButton>
          <TaskButton $active><PdfIcon />VTV kernboodschapp...</TaskButton>
          <Tray>
            <OutlookIcon />
            <svg width="13" height="13" viewBox="0 0 14 14"><rect x="5.500" y="1.500" width="7" height="6" fill="#6fa6ee" stroke="#234a94" /><rect x="1.500" y="5.500" width="7" height="5" fill="#8fbcf4" stroke="#234a94" /><path d="M3 12.500h5" stroke="#234a94" /></svg>
            <svg width="11" height="13" viewBox="0 0 12 14"><path d="M3 7V4a3 3 0 0 1 6 0v3" fill="none" stroke="#8f8f8f" strokeWidth="1.500" /><rect x="1.500" y="6.500" width="9" height="7" fill="#f0c040" stroke="#99701a" /></svg>
            <svg width="14" height="13" viewBox="0 0 14 14"><path d="M.5 3.500h5l1 1.500h7v8H.5z" fill="#b9dcf2" stroke="#3d7898" /><path d="M7 5l4 4H8.500v3h-3V9H3z" fill="#3aa845" stroke="#fff" strokeWidth=".5" /></svg>
            <time>15:21</time>
          </Tray>
        </Taskbar>
      </Desktop>
    </>
  );
}
